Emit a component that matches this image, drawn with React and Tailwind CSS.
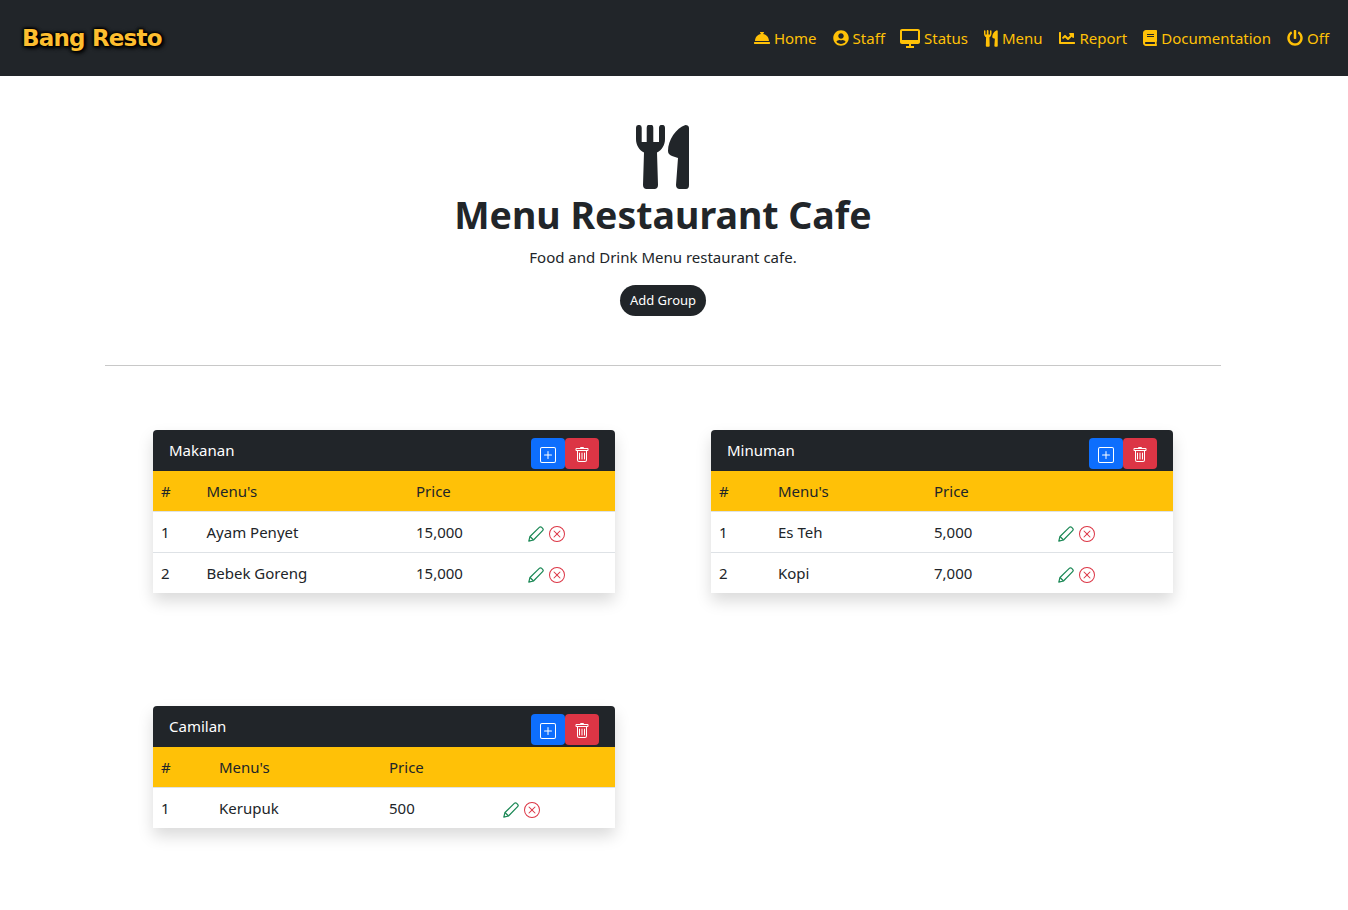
import React from 'react'
import { BiDesktop } from 'react-icons/bi'
import { BsPlusSquare, BsTrash, BsXCircle } from 'react-icons/bs'
import { FaConciergeBell, FaUserCircle, FaChartLine, FaBook, FaPowerOff } from 'react-icons/fa'

// fork and knife, used in the hero and the nav
const CutleryIcon = ({ className }) => (
  <svg viewBox="0 0 54 64" fill="currentColor" className={className}>
    <path d="M0 2.8A2.8 2.8 0 0 1 5.7 2.8V17H10.7V2.8A3.3 3.3 0 0 1 17.3 2.8V17H23V2.8A3 3 0 0 1 29 2.8V14C29 20 26 25 21 27.5L22 60C22 62.5 20.5 64 18.5 64H10.5C8.5 64 7 62.5 7 60L8 27.5C3 25 0 20 0 14Z" />
    <path d="M53 3C53 1 51.5 0 49.5 0C40 3 32 15 32 26C32 29 34 30 36 31L42 33L40 60C40 62.5 41.5 64 43.5 64H50C52 64 53 62.5 53 60Z" />
  </svg>
)

const PencilIcon = ({ className }) => (
  <svg viewBox="0 0 16 16" fill="none" stroke="currentColor" strokeWidth="1.2" strokeLinejoin="round" className={className}>
    <path d="M0.8 15.2L2 10.5L11.3 1.4C12 0.7 13 0.7 13.7 1.4L14.6 2.3C15.3 3 15.3 4 14.6 4.7L5.5 14Z" />
    <path d="M2 10.5L5.5 14" />
  </svg>
)

const navItems = [
  { label: 'Home', icon: <FaConciergeBell className="h-4 w-4 shrink-0" />, box: 'w-[16px]' },
  { label: 'Staff', icon: <FaUserCircle className="h-4 w-4 shrink-0" />, box: 'w-[16px]' },
  { label: 'Status', icon: <BiDesktop className="h-[24px] w-[24px] shrink-0" />, box: 'w-[19px]' },
  { label: 'Menu', icon: <CutleryIcon className="h-[17px] w-[14px] shrink-0" />, box: 'w-[14px]' },
  { label: 'Report', icon: <FaChartLine className="h-4 w-4 shrink-0" />, box: 'w-[17px]' },
  { label: 'Documentation', icon: <FaBook className="h-4 w-4 shrink-0" />, box: 'w-[14px]' },
  { label: 'Off', icon: <FaPowerOff className="h-4 w-4 shrink-0" />, box: 'w-[16px]' },
]

const groups = [
  {
    name: 'Makanan',
    cols: ['w-[45.5px]', 'w-[209.5px]', 'w-[112px]'],
    rows: [['1', 'Ayam Penyet', '15,000'], ['2', 'Bebek Goreng', '15,000']],
  },
  {
    name: 'Minuman',
    cols: ['w-[59px]', 'w-[156px]', 'w-[124px]'],
    rows: [['1', 'Es Teh', '5,000'], ['2', 'Kopi', '7,000']],
  },
  {
    name: 'Camilan',
    cols: ['w-[58px]', 'w-[170px]', 'w-[113.5px]'],
    rows: [['1', 'Kerupuk', '500']],
  },
]

const GroupCard = ({ group }) => (
  <div className="w-[462px] rounded shadow-[0_8px_16px_rgba(0,0,0,0.15)]">
    <div className="flex h-[41px] items-start justify-between rounded-t bg-[#212529] px-4 pt-2">
      <span className="leading-[24px] text-white">{group.name}</span>
      <div className="flex">
        <button className="flex h-[31px] w-[34px] items-center justify-center rounded bg-[#0d6efd] text-white">
          <BsPlusSquare className="mt-[2px] h-4 w-4" />
        </button>
        <button className="flex h-[31px] w-[34px] items-center justify-center rounded bg-[#dc3545] text-white">
          <BsTrash className="mt-[2px] h-4 w-4" />
        </button>
      </div>
    </div>
    <table className="w-full table-fixed border-separate border-spacing-0 text-[#212529]">
      <thead>
        <tr className="bg-[#ffc107]">
          <th className={`${group.cols[0]} h-[41px] border-b border-[#dee2e6] px-2 text-left font-normal`}>#</th>
          <th className={`${group.cols[1]} h-[41px] border-b border-[#dee2e6] px-2 text-left font-normal`}>Menu's</th>
          <th className={`${group.cols[2]} h-[41px] border-b border-[#dee2e6] px-2 text-left font-normal`}>Price</th>
          <th className="h-[41px] border-b border-[#dee2e6] px-2"></th>
        </tr>
      </thead>
      <tbody>
        {group.rows.map((row) => (
          <tr key={row[0]} className="bg-white">
            {row.map((cell) => (
              <td key={cell} className="h-[41px] border-b border-[#dee2e6] px-2 [tr:last-child>&]:h-[40px] [tr:last-child>&]:border-b-0">{cell}</td>
            ))}
            <td className="h-[41px] border-b border-[#dee2e6] px-2 [tr:last-child>&]:h-[40px] [tr:last-child>&]:border-b-0">
              <div className="mt-[4px] flex items-center gap-[5px]">
                <PencilIcon className="h-4 w-4 text-[#198754]" />
                <BsXCircle className="h-4 w-4 text-[#dc3545]" />
              </div>
            </td>
          </tr>
        ))}
      </tbody>
    </table>
  </div>
)

export default function App() {
  return (
    <div className="min-h-[910px] bg-white font-['Noto_Sans',sans-serif] text-[15px] text-[#212529]">
      {/* Navbar */}
      <nav className="flex h-[76px] items-center justify-between bg-[#212529] pl-[22px] pr-[19px]">
        <a className="font-['DejaVu_Sans',sans-serif] text-[23px] font-bold tracking-[-0.8px] text-[#fdbe2f] [text-shadow:0_0_2px_#000,0_0_3px_#000,0_0_3px_#000,0_0_4px_#000,2px_2px_4px_#000]">Bang Resto</a>
        <div className="flex items-center gap-4">
          {navItems.map((item) => (
            <a key={item.label} className="flex items-center gap-1 text-[#ffc107]">
              <span className={`${item.box} flex h-5 items-center justify-center`}>{item.icon}</span>
              {item.label}
            </a>
          ))}
        </div>
      </nav>

      <main className="w-[1326px]">
        {/* Hero */}
        <section className="flex flex-col items-center pt-[49px]">
          <CutleryIcon className="h-[64px] w-[54px]" />
          <h1 className="mt-[2px] text-[37.5px] font-bold leading-[48px]">Menu Restaurant Cafe</h1>
          <p className="mt-[6px] leading-[24px]">Food and Drink Menu restaurant cafe.</p>
          <button className="mt-[16px] h-[31px] rounded-full bg-[#212529] px-[10px] text-[13px] text-white">Add Group</button>
        </section>

        <hr className="mx-auto mt-[49px] w-[1116px] border-[#c8c8c8]" />

        {/* Groups */}
        <section className="mx-auto grid w-[1116px] grid-cols-2 gap-y-[113px] px-12 pt-16">
          {groups.map((group, i) => (
            <div key={group.name} className={i % 2 ? 'justify-self-end' : ''}>
              <GroupCard group={group} />
            </div>
          ))}
        </section>
      </main>
    </div>
  )
}
